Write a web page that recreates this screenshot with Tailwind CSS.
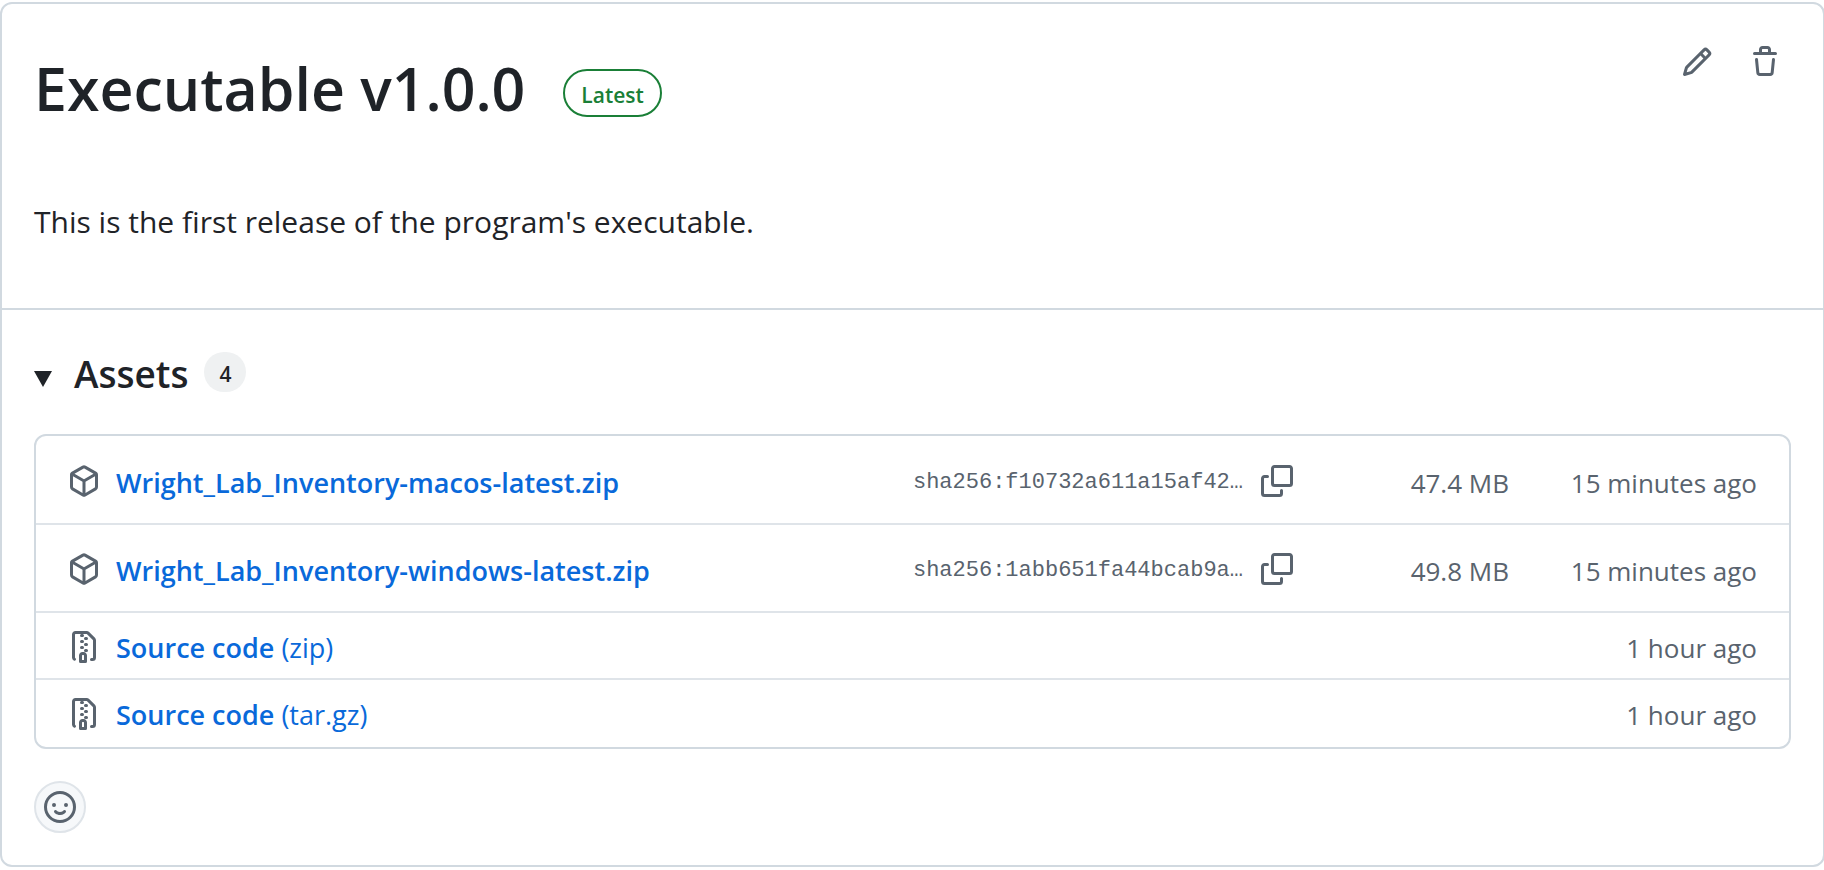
<!DOCTYPE html>
<html lang="en">
<head>
<meta charset="utf-8">
<meta name="viewport" content="width=device-width, initial-scale=1">
<title>Executable v1.0.0</title>
<script src="https://cdn.jsdelivr.net/npm/@tailwindcss/browser@4"></script>
</head>
<body class="overflow-x-hidden bg-white pt-0.5 font-['Open_Sans','Noto_Sans',sans-serif] text-[#1f2328]">
<svg class="hidden" aria-hidden="true">
  <symbol id="package" viewBox="0 0 16 16"><path d="m8.878.392 5.25 3.045c.54.314.872.89.872 1.514v6.098a1.75 1.75 0 0 1-.872 1.514l-5.25 3.045a1.75 1.75 0 0 1-1.756 0l-5.25-3.045A1.75 1.75 0 0 1 1 11.049V4.951c0-.624.332-1.201.872-1.514L7.122.392a1.75 1.75 0 0 1 1.756 0ZM7.875 1.69l-4.63 2.685L8 7.133l4.755-2.758-4.63-2.685a.248.248 0 0 0-.25 0ZM2.5 5.677v5.372c0 .09.047.171.125.216l4.625 2.683V8.432Zm6.25 8.271 4.625-2.683a.25.25 0 0 0 .125-.216V5.677L8.75 8.432Z"/></symbol>
  <symbol id="zip" viewBox="0 0 16 16"><path d="M3.5 1.75v11.5c0 .09.048.173.126.217a.75.75 0 0 1-.752 1.298A1.748 1.748 0 0 1 2 13.25V1.75C2 .784 2.784 0 3.75 0h5.586c.464 0 .909.185 1.237.513l2.914 2.914c.329.328.513.773.513 1.237v8.586A1.75 1.75 0 0 1 12.25 15h-.5a.75.75 0 0 1 0-1.5h.5a.25.25 0 0 0 .25-.25V4.664a.25.25 0 0 0-.073-.177L9.513 1.573a.25.25 0 0 0-.177-.073H7.25a.75.75 0 0 1 0 1.5h-.5a.75.75 0 0 1 0-1.5h-3a.25.25 0 0 0-.25.25Zm3.75 8.75h.5c.966 0 1.75.784 1.75 1.75v3a.75.75 0 0 1-.75.75h-2.5a.75.75 0 0 1-.75-.75v-3c0-.966.784-1.75 1.75-1.75ZM6 5.25a.75.75 0 0 1 .75-.75h.5a.75.75 0 0 1 0 1.5h-.5A.75.75 0 0 1 6 5.25Zm.75 2.25h.5a.75.75 0 0 1 0 1.5h-.5a.75.75 0 0 1 0-1.5ZM8 6.75A.75.75 0 0 1 8.75 6h.5a.75.75 0 0 1 0 1.5h-.5A.75.75 0 0 1 8 6.75ZM8.75 3h.5a.75.75 0 0 1 0 1.5h-.5a.75.75 0 0 1 0-1.5ZM8 9.75A.75.75 0 0 1 8.75 9h.5a.75.75 0 0 1 0 1.5h-.5A.75.75 0 0 1 8 9.75Zm-1 2.5v2.25h1v-2.25a.25.25 0 0 0-.25-.25h-.5a.25.25 0 0 0-.25.25Z"/></symbol>
  <symbol id="copy" viewBox="0 0 16 16"><path d="M0 6.75C0 5.784.784 5 1.75 5h1.5a.75.75 0 0 1 0 1.5h-1.5a.25.25 0 0 0-.25.25v7.5c0 .138.112.25.25.25h7.5a.25.25 0 0 0 .25-.25v-1.5a.75.75 0 0 1 1.5 0v1.5A1.75 1.75 0 0 1 9.25 16h-7.5A1.75 1.75 0 0 1 0 14.25Z"/><path d="M5 1.75C5 .784 5.784 0 6.75 0h7.5C15.216 0 16 .784 16 1.75v7.5A1.75 1.75 0 0 1 14.25 11h-7.5A1.75 1.75 0 0 1 5 9.25Zm1.75-.25a.25.25 0 0 0-.25.25v7.5c0 .138.112.25.25.25h7.5a.25.25 0 0 0 .25-.25v-7.5a.25.25 0 0 0-.25-.25Z"/></symbol>
</svg>

<main class="-mr-px rounded-xl border-2 border-[#d1d9e0]">
  <section class="border-b-2 border-[#d1d9e0] px-8 pt-[42px] pb-[62px]">
    <div class="flex items-start">
      <h1 class="text-[59px] leading-[84px] font-semibold">Executable v1.0.0</h1>
      <span class="mt-[23px] ml-[38px] rounded-full border-2 border-[#1a7f37] px-4 pt-1 text-[21px] leading-10 font-semibold text-[#1a7f37]">Latest</span>
      <div class="mr-[10px] ml-auto flex gap-9 text-[#59636e]">
        <button type="button" aria-label="Edit release"><svg class="size-8 fill-current" viewBox="0 0 16 16"><path d="M11.013 1.427a1.75 1.75 0 0 1 2.474 0l1.086 1.086a1.75 1.75 0 0 1 0 2.474l-8.61 8.61c-.21.21-.47.364-.756.445l-3.251.93a.75.75 0 0 1-.927-.928l.929-3.25c.081-.286.235-.547.445-.758l8.61-8.61Zm.176 4.823L9.75 4.81l-6.286 6.287a.253.253 0 0 0-.064.108l-.558 1.953 1.953-.558a.253.253 0 0 0 .108-.064Zm1.238-3.763a.25.25 0 0 0-.354 0L10.811 3.75l1.439 1.44 1.263-1.263a.25.25 0 0 0 0-.354Z"/></svg></button>
        <button type="button" aria-label="Delete release"><svg class="size-8 fill-current" viewBox="0 0 16 16"><path d="M11 1.75V3h2.25a.75.75 0 0 1 0 1.5H2.75a.75.75 0 0 1 0-1.5H5V1.75C5 .784 5.784 0 6.75 0h2.5C10.216 0 11 .784 11 1.75ZM4.496 6.675l.66 6.6a.25.25 0 0 0 .249.225h5.19a.25.25 0 0 0 .249-.225l.66-6.6a.75.75 0 0 1 1.492.149l-.66 6.6A1.748 1.748 0 0 1 10.595 15h-5.19a1.75 1.75 0 0 1-1.741-1.575l-.66-6.6a.75.75 0 1 1 1.492-.15ZM6.5 1.75V3h3V1.75a.25.25 0 0 0-.25-.25h-2.5a.25.25 0 0 0-.25.25Z"/></svg></button>
      </div>
    </div>
    <p class="mt-[68px] text-[30px] leading-[48px]">This is the first release of the program's executable.</p>
  </section>

  <section class="px-8 pt-9 pb-8">
    <details open>
      <summary class="flex cursor-pointer list-none items-start">
        <svg class="mt-[25px] h-4 w-[18px] fill-current" viewBox="0 0 18 16" aria-hidden="true"><path d="M0 0h18L9 16Z"/></svg>
        <h2 class="ml-[22px] text-[37px] leading-[56px] font-semibold">Assets</h2>
        <span class="mt-1.5 ml-4 min-w-[42px] rounded-full bg-[#eff1f2] px-3 pt-1 text-center text-[21px] leading-9 font-semibold">4</span>
      </summary>
      <ul class="mt-8 rounded-xl border-2 border-[#d1d9e0] pt-px text-[26px] leading-[34px] text-[#59636e]">
        <li class="flex items-start border-b-2 border-[#dfe4e9] px-8 pt-7 pb-[22px] leading-9">
          <svg class="mr-4 size-8 shrink-0 fill-current" aria-hidden="true"><use href="#package"/></svg>
          <a href="#" class="flex-1 text-[27px] font-semibold text-[#0969da]">Wright_Lab_Inventory-macos-latest.zip</a>
          <span class="font-['Liberation_Mono',monospace] text-[22px]">sha256:f10732a611a15af42…</span>
          <button type="button" class="ml-[18px]" aria-label="Copy digest of the macOS archive"><svg class="size-8 fill-current"><use href="#copy"/></svg></button>
          <span class="w-[216px] text-right">47.4 MB</span>
          <span class="w-[248px] text-right">15 minutes ago</span>
        </li>
        <li class="flex items-start border-b-2 border-[#dfe4e9] px-8 pt-7 pb-[22px] leading-9">
          <svg class="mr-4 size-8 shrink-0 fill-current" aria-hidden="true"><use href="#package"/></svg>
          <a href="#" class="flex-1 text-[27px] font-semibold text-[#0969da]">Wright_Lab_Inventory-windows-latest.zip</a>
          <span class="font-['Liberation_Mono',monospace] text-[22px]">sha256:1abb651fa44bcab9a…</span>
          <button type="button" class="ml-[18px]" aria-label="Copy digest of the Windows archive"><svg class="size-8 fill-current"><use href="#copy"/></svg></button>
          <span class="w-[216px] text-right">49.8 MB</span>
          <span class="w-[248px] text-right">15 minutes ago</span>
        </li>
        <li class="flex items-start border-b-2 border-[#dfe4e9] px-8 pt-[18px] pb-[13px]">
          <svg class="mr-4 size-8 shrink-0 fill-current" aria-hidden="true"><use href="#zip"/></svg>
          <a href="#" class="text-[27px] text-[#0969da]"><span class="font-semibold">Source code</span> (zip)</a>
          <span class="ml-auto">1 hour ago</span>
        </li>
        <li class="flex items-start px-8 pt-[18px] pb-[15px]">
          <svg class="mr-4 size-8 shrink-0 fill-current" aria-hidden="true"><use href="#zip"/></svg>
          <a href="#" class="text-[27px] text-[#0969da]"><span class="font-semibold">Source code</span> (tar.gz)</a>
          <span class="ml-auto">1 hour ago</span>
        </li>
      </ul>
    </details>
    <button type="button" class="mt-8 flex size-[52px] items-center justify-center rounded-full border-2 border-[#dfe4e9] bg-[#f6f8fa] text-[#59636e]" aria-label="Add a reaction"><svg class="size-8 shrink-0 fill-current" viewBox="0 0 16 16"><path d="M8 0a8 8 0 1 1 0 16A8 8 0 0 1 8 0ZM1.5 8a6.5 6.5 0 1 0 13 0 6.5 6.5 0 0 0-13 0Zm3.82 1.636a.75.75 0 0 1 1.038.175l.007.009c.103.118.22.222.35.31.264.178.683.37 1.285.37.602 0 1.02-.192 1.285-.371.13-.088.247-.192.35-.31l.007-.008a.75.75 0 0 1 1.222.87l-.022-.015c.02.013.021.015.021.015v.001l-.001.002-.002.003-.005.007-.014.019a2.066 2.066 0 0 1-.184.213c-.16.166-.338.316-.53.445-.63.418-1.37.638-2.127.629-.946 0-1.652-.308-2.126-.63a3.331 3.331 0 0 1-.715-.657l-.014-.02-.005-.006-.002-.003v-.002h-.001l.613-.432-.614.43a.75.75 0 0 1 .183-1.044ZM12 7a1 1 0 1 1-2 0 1 1 0 0 1 2 0ZM5 8a1 1 0 1 1 0-2 1 1 0 0 1 0 2Zm5.25 2.25.592.416a97.71 97.71 0 0 0-.592-.416Z"/></svg></button>
  </section>
</main>
</body>
</html>
